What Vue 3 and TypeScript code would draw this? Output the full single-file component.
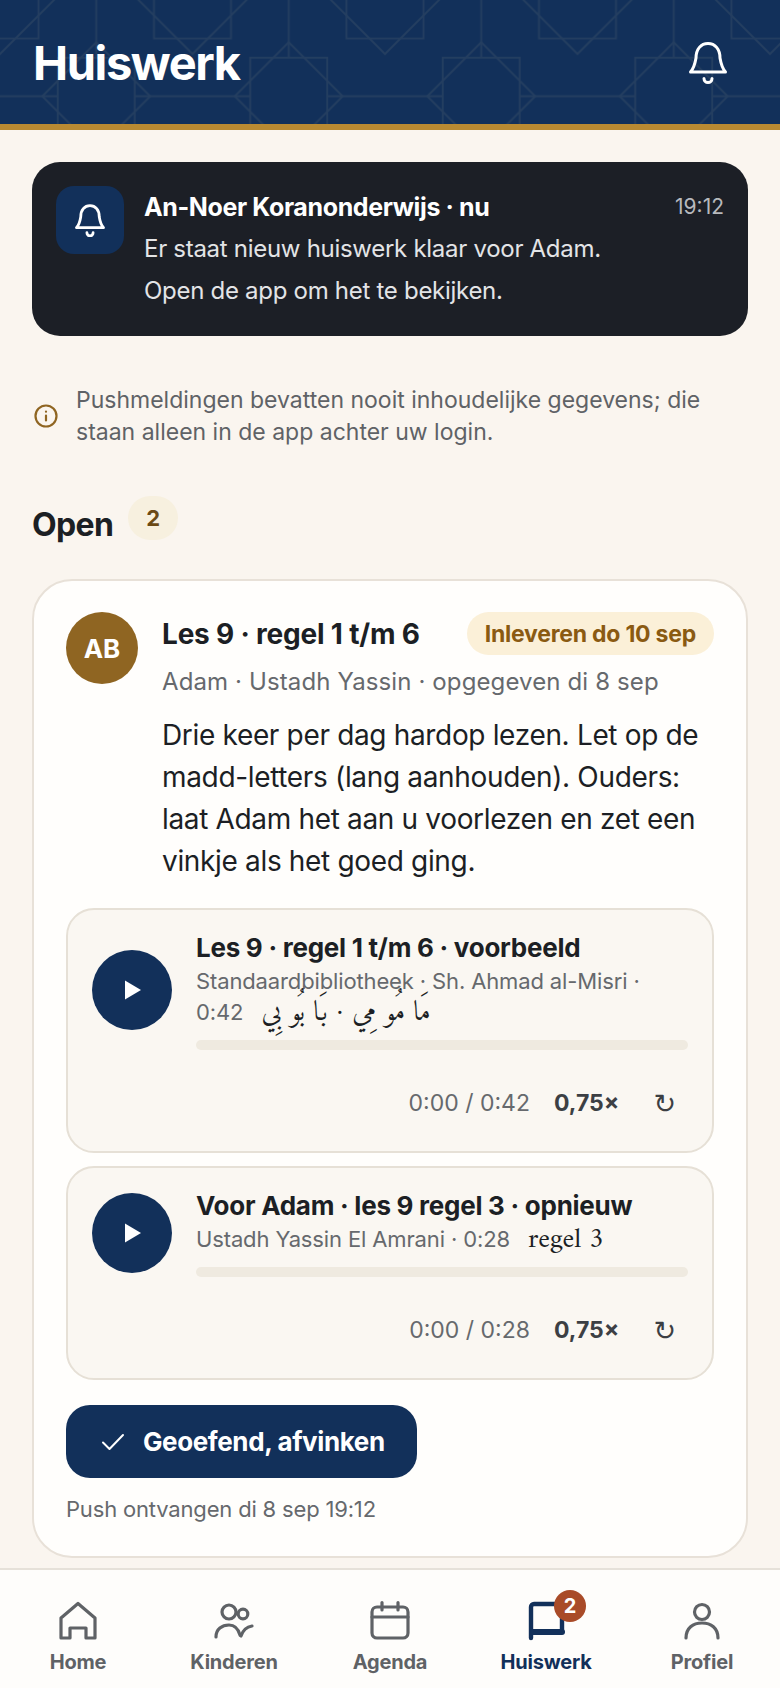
<script setup lang="ts">
interface Track {
  title: string;
  meta: string;
  extra: string;
  total: string;
}

const tracks: Track[] = [
  {
    title: "Les 9 · regel 1 t/m 6 · voorbeeld",
    meta: "Standaardbibliotheek · Sh. Ahmad al-Misri · 0:42",
    extra: "مَا مُو مِي · بَا بُو بِي",
    total: "0:42",
  },
  {
    title: "Voor Adam · les 9 regel 3 · opnieuw",
    meta: "Ustadh Yassin El Amrani · 0:28",
    extra: "regel 3",
    total: "0:28",
  },
];

const tabs = ["Home", "Kinderen", "Agenda", "Huiswerk", "Profiel"];
</script>

<template>
  <div class="app">
    <header class="top">
      <svg class="pattern" width="780" height="124">
        <defs>
          <pattern id="stars" width="192.5" height="192.5" patternUnits="userSpaceOnUse">
            <g fill="none" stroke="#243e60" stroke-width="1.8">
              <rect x="57.75" y="57.75" width="77" height="77" />
              <path d="M96.25 42.25 150.25 96.25 96.25 150.25 42.25 96.25Z" />
              <path d="M134.75 96.25H192.5M0 96.25H57.75M96.25 57.75V0M96.25 134.75V192.5" />
              <path d="M-38.5-38.5h77v77h-77ZM154 -38.5h77v77h-77ZM-38.5 154h77v77h-77ZM154 154h77v77h-77Z" />
              <path d="M0-54 54 0 0 54-54 0ZM192.5-54l54 54-54 54-54-54ZM0 138.5l54 54-54 54-54-54ZM192.5 138.5l54 54-54 54-54-54Z" />
            </g>
          </pattern>
        </defs>
        <rect width="780" height="124" fill="url(#stars)" />
      </svg>
      <h1>Huiswerk</h1>
      <svg class="bell" width="44" height="44" viewBox="0 0 44 44" fill="none" stroke="#fff" stroke-width="3" stroke-linecap="round" stroke-linejoin="round">
        <path d="M4.500 32H39.500C36 28 35 24 34 18C34 9 29 3.500 22 3.500C15 3.500 10 9 10 18C9 24 8 28 4.500 32Z" />
        <path d="M18 38.500a4 4 0 0 0 8 0" />
      </svg>
    </header>

    <main class="content">
      <section class="push">
        <div class="push-icon">
          <svg width="34" height="34" viewBox="0 0 44 44" fill="none" stroke="#fff" stroke-width="3.600" stroke-linecap="round" stroke-linejoin="round">
            <path d="M4.500 32H39.500C36 28 35 24 34 18C34 9 29 3.500 22 3.500C15 3.500 10 9 10 18C9 24 8 28 4.500 32Z" />
            <path d="M18 38.500a4 4 0 0 0 8 0" />
          </svg>
        </div>
        <div class="push-body">
          <div class="push-head">
            <strong>An-Noer Koranonderwijs · nu</strong>
            <span>19:12</span>
          </div>
          <p>Er staat nieuw huiswerk klaar voor Adam.</p>
          <p>Open de app om het te bekijken.</p>
        </div>
      </section>

      <div class="note">
        <svg width="24" height="24" viewBox="0 0 24 24" fill="none" stroke="#8f6522" stroke-width="2.200" stroke-linecap="round">
          <circle cx="12" cy="12" r="10.500" />
          <path d="M12 11.500v5M12 7.600v.1" />
        </svg>
        <p>Pushmeldingen bevatten nooit inhoudelijke gegevens; die staan alleen in de app achter uw login.</p>
      </div>

      <div class="section">
        <h2>Open</h2>
        <span class="count">2</span>
      </div>

      <article class="card">
        <div class="card-head">
          <div class="avatar">AB</div>
          <div class="card-main">
            <div class="title-row">
              <h3>Les 9 · regel 1 t/m 6</h3>
              <span class="due">Inleveren do 10 sep</span>
            </div>
            <div class="sub">Adam · Ustadh Yassin · opgegeven di 8 sep</div>
            <p class="desc">Drie keer per dag hardop lezen. Let op de madd-letters (lang aanhouden). Ouders: laat Adam het aan u voorlezen en zet een vinkje als het goed ging.</p>
          </div>
        </div>

        <div class="tracks">
          <div v-for="t in tracks" :key="t.title" class="track">
            <div class="track-top">
              <button class="play" type="button">
                <svg width="18" height="20" viewBox="0 0 18 20"><path d="M1 0.500 17 10 1 19.500Z" fill="#fff" /></svg>
              </button>
              <div class="track-info">
                <div class="track-title">{{ t.title }}</div>
                <div class="track-meta">
                  {{ t.meta }}
                  <span class="extra">{{ t.extra }}</span>
                </div>
                <div class="bar"></div>
              </div>
            </div>
            <div class="controls">
              <span class="time">0:00 / {{ t.total }}</span>
              <span class="speed">0,75×</span>
              <span class="replay">↻</span>
            </div>
          </div>
        </div>

        <button class="done" type="button">
          <svg width="24" height="18" viewBox="0 0 24 18" fill="none" stroke="#fff" stroke-width="2" stroke-linecap="round" stroke-linejoin="round">
            <path d="M2 9.500 8.500 16 22 2" />
          </svg>
          Geoefend, afvinken
        </button>
        <div class="received">Push ontvangen di 8 sep 19:12</div>
      </article>
    </main>

    <nav class="tabs">
      <div v-for="name in tabs" :key="name" class="tab" :class="{ active: name === 'Huiswerk' }">
        <div class="tab-icon">
          <svg v-if="name === 'Home'" width="44" height="44" viewBox="0 0 44 44" fill="none" stroke="currentColor" stroke-width="3.200" stroke-linecap="round" stroke-linejoin="round">
            <path d="M5 18 22 3.500 39 18V38H30V28H14V38H5Z" />
          </svg>
          <svg v-else-if="name === 'Kinderen'" width="44" height="44" viewBox="0 0 44 44" fill="none" stroke="currentColor" stroke-width="3.200" stroke-linecap="round">
            <circle cx="17" cy="12" r="7" />
            <circle cx="31" cy="14" r="4.800" />
            <path d="M4 37C4 29 10 25 17 25C22 25 26 28 28 35" />
            <path d="M29 36C31 30 34 27 40 26" />
          </svg>
          <svg v-else-if="name === 'Agenda'" width="44" height="44" viewBox="0 0 44 44" fill="none" stroke="currentColor" stroke-width="3.200" stroke-linecap="round" stroke-linejoin="round">
            <rect x="4" y="7" width="36" height="31" rx="5" />
            <path d="M4 17H40M14 2.500V10M30 2.500V10" />
          </svg>
          <svg v-else-if="name === 'Huiswerk'" width="44" height="44" viewBox="0 0 44 44" fill="none" stroke="currentColor" stroke-width="4.400" stroke-linecap="round" stroke-linejoin="round">
            <path d="M7 38V7a3 3 0 0 1 3-3H38V32H8" />
            <path d="M9 32H38" stroke-width="6" />
          </svg>
          <svg v-else width="44" height="44" viewBox="0 0 44 44" fill="none" stroke="currentColor" stroke-width="3.200" stroke-linecap="round">
            <circle cx="22" cy="12" r="7.500" />
            <path d="M6 38C6 28 13 23 22 23S38 28 38 38" />
          </svg>
          <span v-if="name === 'Huiswerk'" class="tab-badge">2</span>
        </div>
        <span class="tab-label">{{ name }}</span>
      </div>
    </nav>
  </div>
</template>

<style scoped>
.app {
  width: 780px;
  height: 1688px;
  display: flex;
  flex-direction: column;
  overflow: hidden;
  background: #faf5ef;
  color: #1c1f24;
  font-family: Inter, "Noto Sans", sans-serif;
}

.top {
  position: relative;
  flex: none;
  height: 124px;
  display: flex;
  align-items: center;
  justify-content: space-between;
  padding: 0 32px 0 33px;
  background: #12305a;
  border-bottom: 6px solid #b98a32;
}
.pattern {
  position: absolute;
  left: 0;
  top: 0;
}
.top h1 {
  position: relative;
  margin: 0;
  font-size: 47px;
  font-weight: 700;
  letter-spacing: -0.03em;
  color: #fff;
}
.bell {
  position: relative;
  margin-right: 18px;
}

.content {
  flex: 1;
  min-height: 0;
  padding: 32px 32px 0;
  overflow: hidden;
}

.push {
  display: flex;
  gap: 20px;
  height: 174px;
  box-sizing: border-box;
  padding: 24px;
  background: #1c1f26;
  border-radius: 28px;
}
.push-icon {
  flex: none;
  width: 68px;
  height: 68px;
  display: flex;
  align-items: center;
  justify-content: center;
  background: #12305a;
  border-radius: 18px;
}
.push-body {
  flex: 1;
  color: #e3e4e6;
  font-size: 24px;
  line-height: 42px;
}
.push-body p {
  margin: 0;
  letter-spacing: -0.012em;
}
.push-head {
  display: flex;
  justify-content: space-between;
}
.push-head strong {
  color: #fff;
  font-size: 25px;
  font-weight: 700;
  letter-spacing: -0.015em;
}
.push-head span {
  color: #b7b9bd;
  font-size: 21px;
}

.note {
  display: flex;
  align-items: center;
  gap: 18px;
  margin-top: 48px;
  padding-left: 2px;
}
.note svg {
  flex: none;
}
.note p {
  margin: 0;
  font-size: 23px;
  line-height: 32px;
  color: #5f6266;
}

.section {
  display: flex;
  align-items: flex-start;
  gap: 15px;
  margin-top: 48px;
}
.section h2 {
  margin: 9px 0 0;
  font-size: 32px;
  line-height: 40px;
  font-weight: 700;
  letter-spacing: -0.02em;
}
.count {
  width: 50px;
  height: 44px;
  display: flex;
  align-items: center;
  justify-content: center;
  background: #f7f0df;
  border-radius: 22px;
  color: #6b4a16;
  font-size: 22px;
  font-weight: 700;
}

.card {
  margin-top: 34px;
  box-sizing: border-box;
  height: 979px;
  padding: 31px 32px;
  background: #fffefc;
  border: 2px solid #e8e1d8;
  border-radius: 40px;
}
.card-head {
  display: flex;
  gap: 24px;
}
.avatar {
  flex: none;
  width: 72px;
  height: 72px;
  display: flex;
  align-items: center;
  justify-content: center;
  border-radius: 50%;
  background: #8f6522;
  color: #fff;
  font-size: 26px;
  font-weight: 700;
}
.card-main {
  flex: 1;
  min-width: 0;
}
.title-row {
  display: flex;
  align-items: center;
  justify-content: space-between;
}
.title-row h3 {
  margin: 0;
  font-size: 28px;
  font-weight: 700;
  letter-spacing: -0.007em;
}
.due {
  height: 43px;
  display: flex;
  align-items: center;
  padding: 0 18px;
  border-radius: 22px;
  background: #fbf0d8;
  color: #8a5a12;
  font-size: 23px;
  font-weight: 700;
  letter-spacing: -0.01em;
}
.sub {
  margin-top: 11px;
  font-size: 24px;
  line-height: 32px;
  color: #66696d;
  letter-spacing: 0.005em;
}
.desc {
  margin: 16px 0 0;
  font-size: 28px;
  line-height: 42px;
  letter-spacing: -0.012em;
}

.tracks {
  display: flex;
  flex-direction: column;
  gap: 13px;
  margin-top: 26px;
}
.track {
  box-sizing: border-box;
  min-height: 214px;
  padding: 20px 24px;
  background: #faf7f2;
  border: 2px solid #e6e0d6;
  border-radius: 28px;
}
.track-top {
  display: flex;
  align-items: center;
  gap: 24px;
}
.play {
  flex: none;
  width: 80px;
  height: 80px;
  display: flex;
  align-items: center;
  justify-content: center;
  padding: 0 0 0 2px;
  border: 0;
  border-radius: 50%;
  background: #12305a;
}
.track-info {
  flex: 1;
  min-width: 0;
}
.track-title {
  font-size: 26px;
  line-height: 36px;
  font-weight: 700;
  letter-spacing: -0.01em;
}
.track-meta {
  font-size: 22px;
  line-height: 31px;
  color: #66696d;
  letter-spacing: -0.006em;
}
.extra {
  margin-left: 12px;
  font-family: Amiri, "Liberation Serif", serif;
  font-size: 28px;
  line-height: 0;
  color: #1c1f24;
}
.bar {
  height: 10px;
  margin-top: 12px;
  border-radius: 5px;
  background: #efeae0;
}
.controls {
  display: flex;
  align-items: center;
  justify-content: flex-end;
  gap: 24px;
  height: 56px;
  margin-top: 25px;
  padding-right: 12px;
  font-size: 23px;
}
.time {
  color: #66696d;
}
.speed {
  font-weight: 700;
  color: #3c3f44;
}
.replay {
  margin-left: 10px;
  font-family: "DejaVu Sans", sans-serif;
  font-size: 27px;
  color: #3c3f44;
}

.done {
  display: flex;
  align-items: center;
  gap: 18px;
  height: 73px;
  margin-top: 25px;
  padding: 0 32px 0 35px;
  border: 0;
  border-radius: 24px;
  background: #12305a;
  color: #fff;
  font-family: inherit;
  font-size: 26px;
  font-weight: 700;
  letter-spacing: -0.015em;
}
.received {
  margin-top: 15px;
  font-size: 22px;
  line-height: 32px;
  color: #66696d;
  letter-spacing: -0.008em;
}

.tabs {
  flex: none;
  height: 120px;
  box-sizing: border-box;
  display: grid;
  grid-template-columns: repeat(5, 1fr);
  background: #fefdfb;
  border-top: 2px solid #e6e1d9;
  padding-top: 30px;
}
.tab {
  display: flex;
  flex-direction: column;
  align-items: center;
  color: #5f6266;
}
.tab.active {
  color: #12305a;
}
.tab-icon {
  position: relative;
  width: 44px;
  height: 44px;
}
.tab-badge {
  position: absolute;
  top: -10px;
  right: -18px;
  width: 32px;
  height: 32px;
  display: flex;
  align-items: center;
  justify-content: center;
  border-radius: 50%;
  background: #a94b28;
  color: #fff;
  font-size: 20px;
  font-weight: 700;
}
.tab-label {
  margin-top: 5px;
  font-size: 20px;
  line-height: 26px;
  font-weight: 700;
  letter-spacing: -0.01em;
}
</style>

<style>
html,
body {
  margin: 0;
  background: #faf5ef;
}
</style>
